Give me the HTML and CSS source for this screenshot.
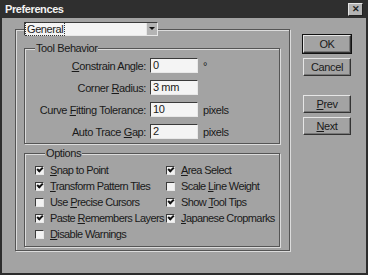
FILE: index.html
```html
<!doctype html>
<html lang="en-US">
<head>
    <meta charset="utf-8">
    <title>Preferences</title>
    <link rel="stylesheet" href="styles.css">
</head>
<body>
  <div class="dialog">
    <div class="titlebar">
      <span class="title">Preferences</span>
      <span class="close">&#x2715;</span>
    </div>
    <div class="content">
      <fieldset class="panel">
        <legend>
          <div class="select">
            <span class="value"><span class="focus">General</span></span>
            <span class="arrow"></span>
          </div>
        </legend>

        <fieldset class="group behavior">
          <legend>Tool Behavior</legend>
          <div class="fields">
            <label><u>C</u>onstrain Angle:</label>
            <div class="input">0</div>
            <span class="unit">&deg;</span>

            <label>Corner <u>R</u>adius:</label>
            <div class="input">3 mm</div>
            <span class="unit"></span>

            <label>Curve <u>F</u>itting Tolerance:</label>
            <div class="input">10</div>
            <span class="unit">pixels</span>

            <label>Auto Trace <u>G</u>ap:</label>
            <div class="input">2</div>
            <span class="unit">pixels</span>
          </div>
        </fieldset>

        <fieldset class="group options">
          <legend>Options</legend>
          <div class="checks">
            <div class="check"><span class="box on"></span><span><u>S</u>nap to Point</span></div>
            <div class="check"><span class="box on"></span><span><u>A</u>rea Select</span></div>
            <div class="check"><span class="box on"></span><span><u>T</u>ransform Pattern Tiles</span></div>
            <div class="check"><span class="box"></span><span>Scale <u>L</u>ine Weight</span></div>
            <div class="check"><span class="box"></span><span>Use <u>P</u>recise Cursors</span></div>
            <div class="check"><span class="box on"></span><span>Show <u>T</u>ool Tips</span></div>
            <div class="check"><span class="box on"></span><span>Paste <u>R</u>emembers Layers</span></div>
            <div class="check"><span class="box on"></span><span><u>J</u>apanese Cropmarks</span></div>
            <div class="check"><span class="box"></span><span><u>D</u>isable Warnings</span></div>
          </div>
        </fieldset>
      </fieldset>

      <div class="buttons">
        <div class="btn default">OK</div>
        <div class="btn">Cancel</div>
        <div class="btn prev"><u>P</u>rev</div>
        <div class="btn"><u>N</u>ext</div>
      </div>
    </div>
  </div>
</body>
</html>
```

FILE: styles.css
```css
:root {
  --face: #a3a3a3;
  --dark: #555555;
  --light: #dcdcdc;
  --font-face: "Liberation Sans", Arial, sans-serif;
}

html, body {
  margin: 0;
  padding: 0;
}

body {
  width: 368px;
  height: 275px;
  overflow: hidden;
  font-family: var(--font-face);
  font-size: 11px;
  letter-spacing: -0.4px;
  color: #1a1a1a;
}

.dialog {
  box-sizing: border-box;
  width: 368px;
  height: 275px;
  background: var(--face);
  border: 2px solid #2c2c2c;
  border-top: 0;
}

/* title bar */
.titlebar {
  height: 18px;
  margin: 0 -2px;
  background: #2f2f2f;
  display: flex;
  align-items: center;
  justify-content: space-between;
  padding: 0 5px 0 5px;
}

.title {
  color: #f2f2f2;
  font-weight: bold;
  font-size: 11px;
}

.close {
  width: 13px;
  height: 11px;
  background: #b4b4b4;
  border: 1px solid;
  border-color: #e6e6e6 #222 #222 #e6e6e6;
  font-size: 9px;
  font-weight: bold;
  line-height: 11px;
  text-align: center;
  letter-spacing: 0;
  color: #222;
}

/* main area */
.content {
  display: flex;
  align-items: flex-start;
  padding: 4px 0 0 13px;
}

fieldset {
  margin: 0;
  min-width: 0;
}

.panel {
  width: 275px;
  box-sizing: border-box;
  padding: 0 9px 3px 8px;
  border: 1px solid var(--dark);
  box-shadow: inset 1px 1px 0 var(--light), 1px 1px 0 var(--light);
}

.panel > legend {
  padding: 0;
  background: var(--face);
}

.select {
  width: 134px;
  height: 14px;
  box-sizing: border-box;
  display: flex;
  background: #f4f4f4;
  border: 1px solid;
  border-color: #3a3a3a #e8e8e8 #e8e8e8 #3a3a3a;
}

.select .value {
  flex: 1;
  padding-left: 1px;
  line-height: 12px;
}

.select .focus {
  outline: 1px dotted #333;
  padding: 0 1px;
}

.select .arrow {
  width: 10px;
  background: #b4b4b4;
  border-left: 1px solid #e6e6e6;
  position: relative;
}

.select .arrow::after {
  content: "";
  position: absolute;
  left: 2px;
  top: 4px;
  border: 3px solid transparent;
  border-top: 3px solid #111;
  border-bottom: 0;
}

.group {
  width: 256px;
  box-sizing: border-box;
  border: 1px solid var(--dark);
  box-shadow: inset 1px 1px 0 var(--light), 1px 1px 0 var(--light);
}

.group > legend {
  margin-left: 10px;
  padding: 0 1px;
  line-height: 13px;
  background: var(--face);
}

.behavior {
  margin-top: 6px;
  padding: 3px 0 4px 0;
}

.fields {
  display: grid;
  grid-template-columns: 121px 48px auto;
  column-gap: 4px;
  row-gap: 7px;
  align-items: center;
}

.fields label {
  text-align: right;
}

.input {
  height: 15px;
  box-sizing: border-box;
  background: #f4f4f4;
  border: 1px solid;
  border-color: #3a3a3a #e8e8e8 #e8e8e8 #3a3a3a;
  padding-left: 2px;
  line-height: 13px;
}

.unit {
  padding-left: 1px;
}

.options {
  margin-top: 3px;
  padding: 2px 0 4px 10px;
}

.checks {
  display: grid;
  grid-template-columns: 131px auto;
  grid-auto-rows: 16px;
}

.check {
  display: flex;
  align-items: center;
  gap: 6px;
  white-space: nowrap;
  letter-spacing: -0.6px;
}

.box {
  flex: none;
  width: 9px;
  height: 9px;
  box-sizing: border-box;
  background: #f2f2f2;
  border: 1px solid;
  border-color: #3a3a3a #e8e8e8 #e8e8e8 #3a3a3a;
  position: relative;
}

.box.on::after {
  content: "";
  position: absolute;
  left: 1px;
  top: 0px;
  width: 4px;
  height: 2px;
  border-left: 2px solid #111;
  border-bottom: 2px solid #111;
  transform: rotate(-45deg);
}

/* right buttons */
.buttons {
  display: flex;
  flex-direction: column;
  gap: 5px;
  margin: 13px 0 0 13px;
}

.btn {
  width: 48px;
  height: 18px;
  box-sizing: border-box;
  border: 1px solid;
  border-color: #e6e6e6 #333 #333 #e6e6e6;
  box-shadow: inset -1px -1px 0 #777;
  text-align: center;
  line-height: 16px;
}

.btn.default {
  outline: 1px solid #111;
}

.btn.prev {
  margin-top: 14px;
}

.btn.prev + .btn {
  margin-top: -1px;
}
```
